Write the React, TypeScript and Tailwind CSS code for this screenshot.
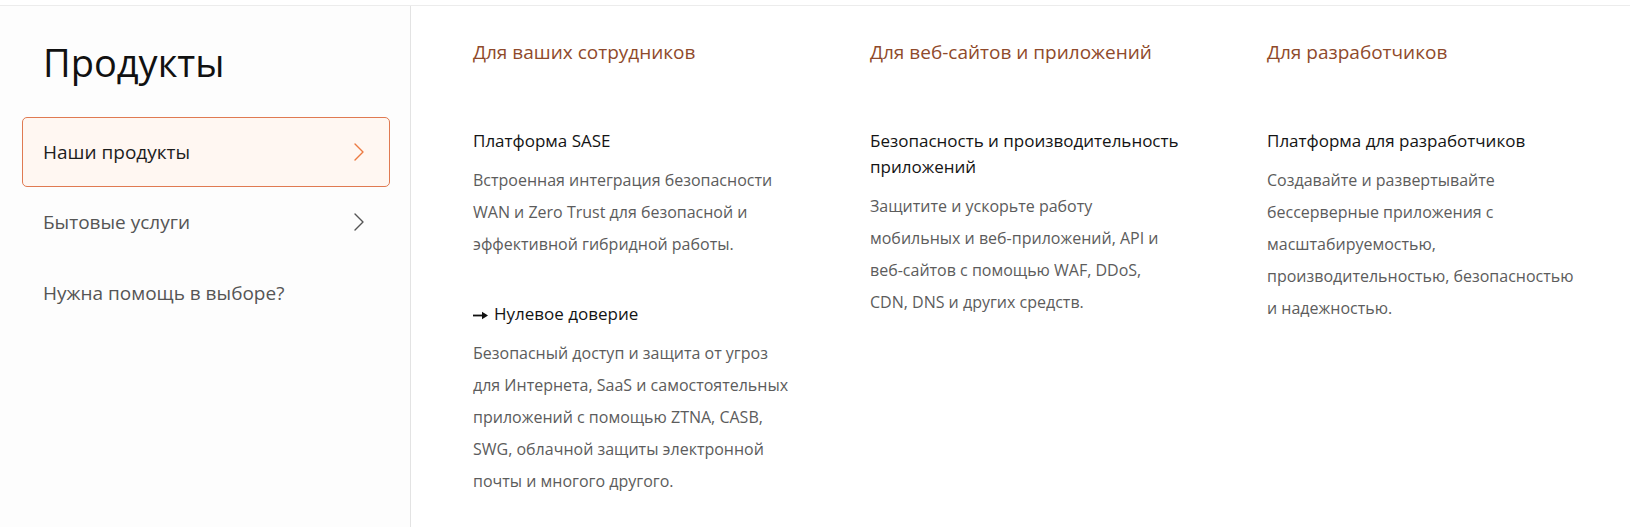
const columns = [
  {
    heading: "Для ваших сотрудников",
    items: [
      {
        title: ["Платформа SASE"],
        desc: [
          "Встроенная интеграция безопасности",
          "WAN и Zero Trust для безопасной и",
          "эффективной гибридной работы.",
        ],
      },
      {
        title: ["Нулевое доверие"],
        arrow: true,
        desc: [
          "Безопасный доступ и защита от угроз",
          "для Интернета, SaaS и самостоятельных",
          "приложений с помощью ZTNA, CASB,",
          "SWG, облачной защиты электронной",
          "почты и многого другого.",
        ],
      },
    ],
  },
  {
    heading: "Для веб-сайтов и приложений",
    items: [
      {
        title: ["Безопасность и производительность", "приложений"],
        desc: [
          "Защитите и ускорьте работу",
          "мобильных и веб-приложений, API и",
          "веб-сайтов с помощью WAF, DDoS,",
          "CDN, DNS и других средств.",
        ],
      },
    ],
  },
  {
    heading: "Для разработчиков",
    items: [
      {
        title: ["Платформа для разработчиков"],
        desc: [
          "Создавайте и развертывайте",
          "бессерверные приложения с",
          "масштабируемостью,",
          "производительностью, безопасностью",
          "и надежностью.",
        ],
      },
    ],
  },
]

function Chevron({ className }: { className?: string }) {
  return (
    <svg width="10" height="18" viewBox="0 0 10 18" fill="none" className={className}>
      <path d="M1 1l8 8-8 8" stroke="currentColor" strokeWidth="1.4" strokeLinecap="round" strokeLinejoin="round" />
    </svg>
  )
}

function Arrow() {
  return (
    <svg width="15" height="9" viewBox="0 0 15 9" className="mr-[6px] inline-block align-middle">
      <rect x="0" y="3.6" width="10" height="1.8" fill="#111" />
      <path d="M9 0.8L15 4.5L9 8.2Z" fill="#111" />
    </svg>
  )
}

export default function App() {
  return (
    <div className="h-[527px] w-full bg-white pt-[5px] font-['Open_Sans',sans-serif]">
      <div className="flex h-full border-t border-[#ececec]">
        {/* left menu */}
        <aside className="w-[411px] shrink-0 border-r border-[#e3e3e3] bg-[#fdfdfd] pl-[22px] pr-[20px]">
          <h2 className="mt-[33px] pl-[21px] text-[38px] leading-[46px] text-[#111]">Продукты</h2>
          <nav className="mt-[32px] flex flex-col">
            <a className="flex h-[70px] items-center justify-between rounded-[5px] border border-[#e07a52] bg-[#fff7f2] pl-[20px] pr-[25px] text-[19px] text-[#1d1d1d]">
              <span>Наши продукты</span>
              <Chevron className="text-[#ec7a42]" />
            </a>
            <a className="flex h-[70px] items-center justify-between border border-transparent pl-[20px] pr-[25px] text-[19px] text-[#555]">
              <span>Бытовые услуги</span>
              <Chevron className="text-[#555]" />
            </a>
            <a className="flex h-[72px] items-center border border-transparent pl-[20px] text-[19px] text-[#555]">
              <span>Нужна помощь в выборе?</span>
            </a>
          </nav>
        </aside>

        {/* product columns */}
        <div className="flex flex-1 gap-[40px] pl-[62px] pt-[33px]">
          {columns.map((col) => (
            <div key={col.heading} className="w-[357px] shrink-0">
              <h3 className="text-[19px] leading-[26px] text-[#8f4a2b]">{col.heading}</h3>
              <div className="mt-[63px] flex flex-col gap-[41px]">
                {col.items.map((item) => (
                  <div key={item.title[0]}>
                    <p className="whitespace-nowrap text-[17px] leading-[26px] text-[#141414]">
                      {item.title.map((t, i) => (
                        <span key={i} className="block">
                          {i === 0 && item.arrow && <Arrow />}
                          {t}
                        </span>
                      ))}
                    </p>
                    <p className="mt-[10px] whitespace-nowrap text-[16px] leading-[32px] text-[#5c5c5c]">
                      {item.desc.map((d, i) => (
                        <span key={i} className="block">
                          {d}
                        </span>
                      ))}
                    </p>
                  </div>
                ))}
              </div>
            </div>
          ))}
        </div>
      </div>
    </div>
  )
}
